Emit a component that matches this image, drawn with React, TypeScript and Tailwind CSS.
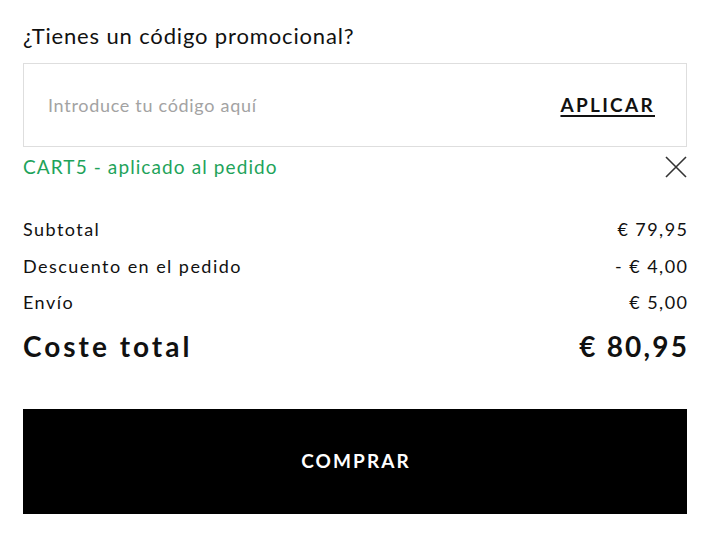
import React from "react";

export default function App() {
  return (
    <div className="w-[708px] h-[537px] bg-white text-black" style={{ fontFamily: "Lato, 'Noto Sans', sans-serif" }}>
      <div className="px-[23px] pt-[21px] w-[710px]">
        <h2 className="text-[22px] leading-[30px] tracking-[0.85px] text-[#111]">¿Tienes un código promocional?</h2>
        <div className="mt-[12px] h-[84px] w-[664px] border border-[#dedede] flex items-center justify-between pl-[24px] pr-[31px]">
          <span className="text-[18px] tracking-[0.7px] text-[#a3a3a3]">Introduce tu código aquí</span>
          <span className="text-[19px] font-bold tracking-[2.3px] underline underline-offset-[3px] decoration-2 text-[#111]">APLICAR</span>
        </div>
        <div className="mt-[7px] w-[664px] flex items-center justify-between h-[26px]">
          <span className="text-[19px] leading-[26px] tracking-[1.1px] text-[#1ea35a]">CART5 - aplicado al pedido</span>
          <svg width="22" height="22" viewBox="0 0 22 22">
            <path d="M1 1 L21 21 M21 1 L1 21" stroke="#333" strokeWidth="1.6" fill="none" />
          </svg>
        </div>
        <div className="mt-[31px] w-[664px] flex flex-col text-[18px] tracking-[1.45px] text-[#111]">
          <div className="flex justify-between h-[37px] leading-[36px] items-start"><span>Subtotal</span><span className="mr-[-1.45px]">€ 79,95</span></div>
          <div className="flex justify-between h-[36px] leading-[36px] items-start"><span>Descuento en el pedido</span><span className="mr-[-1.45px]">- € 4,00</span></div>
          <div className="flex justify-between h-[34px] leading-[36px] items-start"><span>Envío</span><span className="mr-[-1.45px]">€ 5,00</span></div>
          <div className="flex justify-between h-[56px] leading-[56px] items-start text-[28px] font-bold">
            <span className="tracking-[3px]">Coste total</span>
            <span className="tracking-[2.2px] mr-[-2.2px]">€ 80,95</span>
          </div>
        </div>
        <div className="mt-[35px] w-[664px] h-[105px] bg-black flex items-center justify-center">
          <span className="text-white text-[19px] font-bold tracking-[2.1px] pl-[2px]">COMPRAR</span>
        </div>
      </div>
    </div>
  );
}
